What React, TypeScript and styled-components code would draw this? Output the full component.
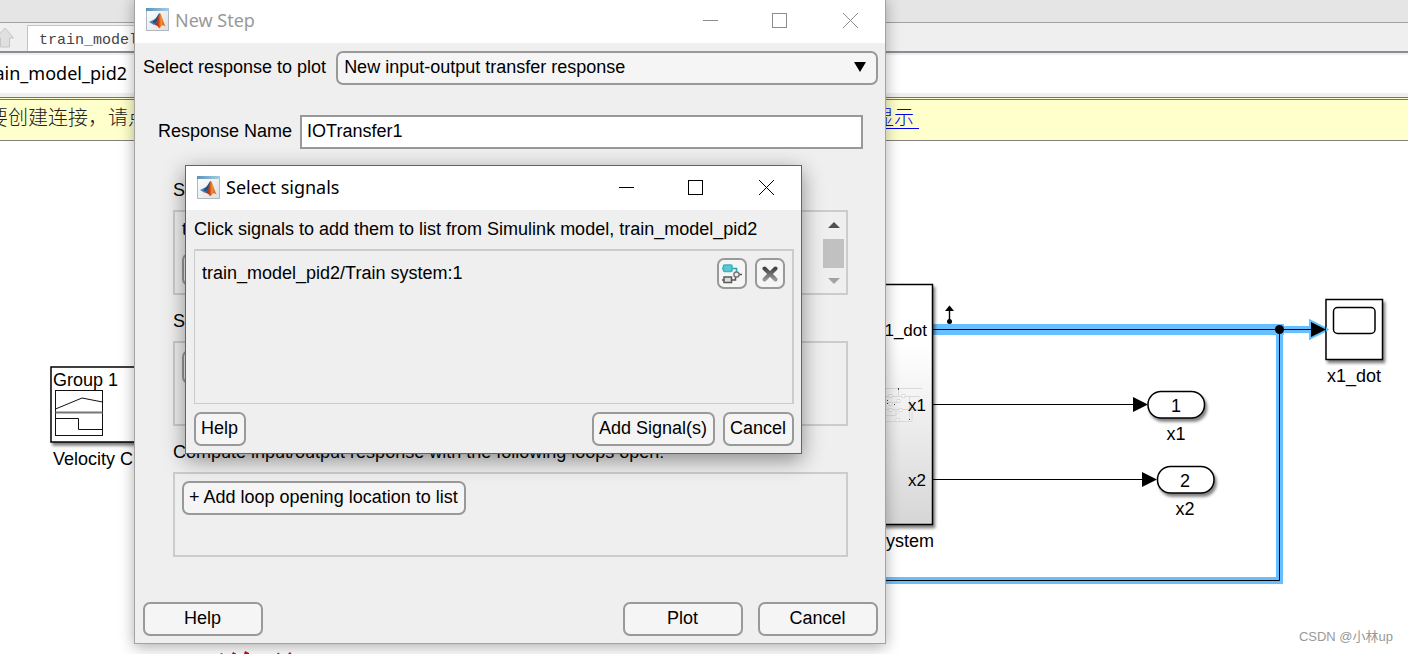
import React from "react";
import styled, { createGlobalStyle, css } from "styled-components";

const sans = `"Liberation Sans", Arial, "Noto Sans CJK SC", sans-serif`;
const ui = `"Noto Sans", "Segoe UI", "Noto Sans CJK SC", sans-serif`;

const GlobalStyle = createGlobalStyle`
  * { box-sizing: border-box; }
  body { margin: 0; background: #fff; color: #000; font-family: ${sans}; font-size: 18px; line-height: 20px; overflow: hidden; }
  button, input, select { font: inherit; color: inherit; margin: 0; }
`;

/* ---------- editor behind the dialogs ---------- */

const Desktop = styled.main`
  position: relative;
  min-height: 100vh;
  display: flex;
  flex-direction: column;
  overflow: hidden;
`;

const Ribbon = styled.div`
  height: 23px;
  background: #e5e5e5;
  border-bottom: 1px solid #a0a0a0;
`;

const TabBar = styled.nav`
  height: 30px;
  display: flex;
  align-items: flex-end;
  gap: 12px;
  background: #efefef;
  border-bottom: 2px solid #8a8d95;
`;

const UpButton = styled.button`
  width: 15px;
  height: 26px;
  padding: 0;
  border: 0;
  background: none;
  display: flex;
  align-items: center;
`;

const Tab = styled.a`
  width: 190px;
  height: 26px;
  padding: 5px 11px 0;
  border: 1px solid #c4c4c4;
  border-bottom: 0;
  background: #fff;
  color: #444;
  text-decoration: none;
  white-space: nowrap;
  font-family: "Liberation Mono", monospace;
  font-size: 15px;
`;

const PathBar = styled.div`
  height: 44px;
  background: #fff;
  border-top: 2px solid #efefef;
  border-bottom: 4px solid #efefef;
  display: flex;
  align-items: center;
  padding-bottom: 2px;
  font-family: ${ui};
`;

const PathName = styled.span`
  width: 127px;
  display: flex;
  justify-content: flex-end;
  white-space: nowrap;
`;

const Notice = styled.div`
  height: 44px;
  display: flex;
  padding-top: 6px;
  background: #ffffcc;
  border-top: 3px double #70747c;
  border-bottom: 1px solid #808080;
  font-family: "Noto Sans CJK SC", sans-serif;
  font-weight: 300;
  font-size: 20px;
  line-height: 22px;
  color: #222;
`;

const NoticeText = styled.span`
  width: 886px;
  margin-left: -12px;
  white-space: nowrap;
`;

const NoticeLink = styled.a`
  color: #0000ee;
  width: 45px;
  height: 23px;
  text-decoration: none;
  border-bottom: 1px solid #0000ee;
`;

const Canvas = styled.section`
  flex: 1;
  overflow: hidden;
  svg { display: block; }
`;

const Watermark = styled.span`
  position: absolute;
  right: 15px;
  bottom: 7px;
  color: #999;
  font-family: ${sans};
  font-size: 13px;
`;

/* ---------- dialogs ---------- */

const Window = styled.div<{ $active?: boolean }>`
  position: absolute;
  background: #efefef;
  border: 1px solid ${p => (p.$active ? "#646464" : "#a3a3a3")};
  box-shadow: ${p => (p.$active ? "0 6px 20px rgba(0,0,0,.42)" : "0 3px 14px rgba(0,0,0,.32)")};
`;

const StepWindow = styled(Window)`
  left: 134px;
  top: -3px;
  width: 752px;
`;

const SignalsWindow = styled(Window)`
  left: 185px;
  top: 165px;
  width: 617px;
`;

const TitleBar = styled.header<{ $active?: boolean }>`
  height: ${p => (p.$active ? 44 : 45)}px;
  display: flex;
  align-items: center;
  padding: 0 0 2px 11px;
  gap: 6px;
  background: #fff;
  color: ${p => (p.$active ? "#000" : "#999")};
`;

const Title = styled.h1`
  flex: 1;
  margin: 0;
  font: 400 18px/22px ${ui};
`;

const CaptionButtons = styled.div`
  display: flex;
`;

const CaptionButton = styled.button`
  width: 70px;
  height: 40px;
  padding: 0;
  border: 0;
  background: none;
  display: flex;
  align-items: center;
  justify-content: center;
`;

const Body = styled.form`
  padding: 8px 7px 7px 8px;
`;

const control = css`
  height: 34px;
  border: 2px solid #999;
  background: #f5f5f5;
`;

const Button = styled.button<{ $wide?: boolean }>`
  ${control}
  width: ${p => (p.$wide ? "120px" : "auto")};
  padding: 0 6px 2px 5px;
  border-radius: 7px;
  white-space: nowrap;
`;

const IconButton = styled.button`
  width: 30px;
  height: 31px;
  padding: 0;
  border: 2px solid #999;
  border-radius: 7px;
  background: #f5f5f5;
  display: flex;
  align-items: center;
  justify-content: center;
`;

const Field = styled.div`
  display: flex;
  gap: 10px;
`;

const NameField = styled(Field)`
  margin: 30px 15px 29px;
  gap: 8px;
`;

const Label = styled.label`
  line-height: 32px;
  white-space: nowrap;
`;

const SelectBox = styled.div`
  position: relative;
  flex: 1;
  svg { position: absolute; right: 12px; top: 11px; pointer-events: none; }
`;

const Select = styled.select`
  ${control}
  display: block;
  width: 100%;
  padding: 0 6px 2px;
  border-radius: 7px;
  appearance: none;
`;

const TextInput = styled.input`
  ${control}
  flex: 1;
  min-width: 0;
  padding: 0 5px 2px;
  background: #fff;
`;

const Sections = styled.div`
  display: flex;
  flex-direction: column;
  gap: 14px;
  margin: 0 30px 45px;
`;

const SectionLabel = styled.h2`
  margin: 0 0 8px;
  font: inherit;
  line-height: 24px;
`;

const Panel = styled.div`
  height: 85px;
  border: 2px solid #ccc;
  display: flex;
  justify-content: space-between;
  overflow: hidden;
`;

const PanelItems = styled.div`
  padding: 7px;
  display: flex;
  flex-direction: column;
  align-items: flex-start;
  gap: 14px;
`;

const ScrollBar = styled.div`
  width: 23px;
  padding: 9px 2px 8px 0;
  display: flex;
  flex-direction: column;
  justify-content: space-between;
  align-items: center;
`;

const ScrollThumb = styled.div`
  width: 21px;
  height: 29px;
  background: #c1c1c1;
`;

const Footer = styled.footer`
  display: flex;
  gap: 8px;
  & > :first-child { margin-right: auto; }
`;

const StepFooter = styled(Footer)`
  gap: 15px;
`;

const Hint = styled.p`
  margin: 0 0 9px;
  line-height: 22px;
`;

const SignalList = styled.ul`
  height: 155px;
  margin: 0 0 8px;
  padding: 7px;
  list-style: none;
  border: solid #ccc;
  border-width: 2px 2px 1px 1px;
`;

const SignalRow = styled.li`
  display: flex;
  gap: 8px;
`;

const SignalName = styled.span`
  flex: 1;
  line-height: 30px;
`;

/* ---------- icons ---------- */

const MatlabIcon = ({ id }: { id: string }) => (
  <svg width="23" height="23" viewBox="0 0 23 23" aria-hidden="true">
    <defs>
      <linearGradient id={id + "bg"} x1="0" y1="0" x2="1" y2="1">
        <stop offset="0" stopColor="#fff" />
        <stop offset="1" stopColor="#dcdfe3" />
      </linearGradient>
      <linearGradient id={id + "top"}>
        <stop offset="0" stopColor="#5a93ba" />
        <stop offset="1" stopColor="#a6cee6" />
      </linearGradient>
      <linearGradient id={id + "fl"} x1="0" y1="0" x2="1" y2="0">
        <stop offset="0" stopColor="#7a1f14" />
        <stop offset=".4" stopColor="#c9401a" />
        <stop offset=".62" stopColor="#f6952c" />
        <stop offset="1" stopColor="#c4381a" />
      </linearGradient>
    </defs>
    <rect x=".5" y=".5" width="22" height="22" fill={`url(#${id}bg)`} stroke="#b4b8bd" />
    <rect x="0" y="0" width="23" height="3" fill={`url(#${id}top)`} />
    <path d="M3 14l5-2.500c2-.4 3-3.500 5.500-6.500l-2 8-3.500 4z" fill="#3f86c0" />
    <path d="M8 12c2-.5 3.500-4.500 5.500-7l-1.500 7-2.500 4-3-1.500z" fill="#274f7c" />
    <path d="M8 17c2-1 2.500-2.500 3.500-5 .8-3 1.500-7 2.300-7 1.500 0 2.700 7.500 5.700 13.500-2-1.700-3-1.700-4.200-.2-.9 1-1.300 1.600-2.300 2-.8-2-2.500-3.500-5-3.300z" fill={`url(#${id}fl)`} />
  </svg>
);

const Caption = ({ active }: { active?: boolean }) => {
  const c = active ? "#000" : "#8c8c8c";
  return (
    <CaptionButtons>
      <CaptionButton type="button" aria-label="Minimize">
        <svg width="16" height="16"><path d="M1 8.500h15" stroke={c} /></svg>
      </CaptionButton>
      <CaptionButton type="button" aria-label="Maximize">
        <svg width="16" height="16"><rect x=".5" y="1.500" width="14" height="14" fill="none" stroke={c} /></svg>
      </CaptionButton>
      <CaptionButton type="button" aria-label="Close">
        <svg width="16" height="16"><path d="M1 1l15 15M16 1l-15 15" stroke={c} /></svg>
      </CaptionButton>
    </CaptionButtons>
  );
};

const HighlightIcon = () => (
  <svg width="22" height="22" viewBox="0 0 22 22" fill="none" aria-hidden="true">
    <path d="M1 5.500h14.500v4" stroke="#2aa5b5" strokeWidth="1.600" />
    <rect x="2.500" y="2" width="8.500" height="6.500" rx="1" fill="#5cc8d2" stroke="#3fb3c0" strokeWidth="1.600" />
    <path d="M1 17h13.500v-4.500M18 11.500h3" stroke="#555" strokeWidth="1.500" />
    <rect x="3" y="14" width="7.500" height="5.500" fill="#ddd" stroke="#5a5a5a" strokeWidth="1.500" />
    <circle cx="15.500" cy="11.500" r="2.600" fill="#eee" stroke="#777" strokeWidth="1.500" />
  </svg>
);

const RemoveIcon = () => (
  <svg width="20" height="20" viewBox="0 0 20 20" aria-hidden="true">
    <defs>
      <linearGradient id="cross" x1="0" y1="0" x2="0" y2="1">
        <stop offset="0" stopColor="#444" />
        <stop offset="1" stopColor="#959595" />
      </linearGradient>
    </defs>
    <path d="M4.500 4.500L15.500 15.500M15.500 4.500L4.500 15.500" stroke="url(#cross)" strokeWidth="4" strokeLinecap="round" />
  </svg>
);

/* ---------- block diagram ---------- */

const Diagram = () => (
  <svg width="1408" height="513" viewBox="0 141 1408 513" fontFamily="Liberation Sans, Arial, sans-serif" fontSize="18">
    <defs>
      <linearGradient id="block" x1="0" y1="0" x2="0" y2="1">
        <stop offset=".25" stopColor="#fff" />
        <stop offset="1" stopColor="#d6d6d6" />
      </linearGradient>
      <filter id="shade" x="-20%" y="-20%" width="150%" height="150%">
        <feDropShadow dx="2" dy="3" stdDeviation="1.500" floodOpacity=".5" />
      </filter>
    </defs>

    {/* signal builder */}
    <rect x="51" y="367" width="110" height="75" fill="#fff" stroke="#000" strokeWidth="1.500" filter="url(#shade)" />
    <text x="53" y="386">Group 1</text>
    <g fill="none" stroke="#111">
      <rect x="55.500" y="390.500" width="47" height="45" />
      <path d="M55.500 409L82 398l20.500 4M55.500 418.500h23v11h24" />
      <path d="M55.500 412.500h47" stroke="#777" strokeWidth="2" />
    </g>
    <text x="53" y="465">Velocity C</text>

    {/* highlighted signal */}
    <g fill="none" stroke="#66c0ff">
      <path d="M933 329.500h351" strokeWidth="11" />
      <path d="M1280 329.500h34M1279.500 329v251.500H880" strokeWidth="7" />
      <path d="M1311 322l15 7.500-15 7.500z" strokeWidth="4" />
    </g>
    <path d="M933 329.500h380M1279.500 329v251.500H880M933 404.500h202M933 479.500h212" fill="none" stroke="#000" />
    <circle cx="1279.500" cy="329.500" r="4.500" />

    {/* subsystem */}
    <rect x="800" y="284.500" width="132.500" height="240" fill="url(#block)" stroke="#000" strokeWidth="1.500" filter="url(#shade)" />
    <g fill="none" stroke="#dadada">
      <path d="M880 388.500h42M880 396.500h40M880 402.500h20M880 409.500h42M880 415.500h16v-6M880 421.500h32v-10M898.500 388v8M909.500 396v24" />
      <path d="M889 394.500h3v3h-3zM902 394.500h3v3h-3zM897 399.500h3v3h-3zM889 402.500h3v3h-3zM889 408.500h3v3h-3zM899 408.500h3v3h-3zM896 418.500h3v3h-3z" fill="#fff" />
    </g>
    <path d="M898 388h1v2h-1zM887 400h1v1h-1zM887 403h1v1h-1zM894 404h1v1h-1zM909 419h1v1h-1z" fill="#444" />
    <g textAnchor="end" fontSize="17">
      <text x="927" y="336">x1_dot</text>
      <text x="926" y="411">x1</text>
      <text x="926" y="486">x2</text>
    </g>
    <text x="934" y="547" textAnchor="end">system</text>

    {/* scope */}
    <rect x="1326" y="299.500" width="56.500" height="60" fill="#fff" stroke="#000" strokeWidth="1.500" filter="url(#shade)" />
    <rect x="1333.500" y="307.500" width="41.500" height="26" rx="4" fill="#fff" stroke="#000" strokeWidth="1.500" />

    {/* arrow heads */}
    <path d="M1326 327l3 2.500-3 2.500z" fill="#66c0ff" />
    <path d="M1311 322l15 7.500-15 7.500zM1133 397l15 7.500-15 7.500zM1142 472l15 7.500-15 7.500z" />

    {/* outports */}
    <g fill="#fff" stroke="#000" strokeWidth="1.500" filter="url(#shade)">
      <rect x="1148" y="391.500" width="56.500" height="26.500" rx="13" />
      <rect x="1157.500" y="466.500" width="56.500" height="26.500" rx="13" />
    </g>
    <g textAnchor="middle">
      <text x="1354" y="382">x1_dot</text>
      <text x="1176" y="412">1</text>
      <text x="1176" y="440">x1</text>
      <text x="1185" y="487">2</text>
      <text x="1185" y="515">x2</text>
    </g>

    {/* resize cursor */}
    <path d="M949.500 305.500l4.500 5.500h-9z" />
    <path d="M949.500 309v12" stroke="#000" strokeWidth="1.400" />
    <circle cx="949.500" cy="321.500" r="2.500" />

    {/* red marks at the lower edge */}
    <path d="M220 654l1.500-1 1.500 1zM232 654l1-2 3 1.500v.5zM244 654l1-3 4 2v1zM277 654l1-1.500 2 1.500zM288 654l2-2 1.500 2z" fill="#c00d1a" />
  </svg>
);

const App = () => (
  <>
    <GlobalStyle />
    <Desktop>
      <Ribbon />
      <TabBar>
        <UpButton type="button" aria-label="Up to parent">
          <svg width="15" height="22" viewBox="0 0 15 22">
            <path d="M5 1l8.500 10H9.500v9h-9v-9H-4z" fill="#e0e0e0" stroke="#c6c6c6" />
          </svg>
        </UpButton>
        <Tab href="#model">train_model</Tab>
      </TabBar>
      <PathBar><PathName>train_model_pid2</PathName></PathBar>
      <Notice>
        <NoticeText>要创建连接，请点</NoticeText>
        <NoticeLink href="#show">显示</NoticeLink>
      </Notice>
      <Canvas><Diagram /></Canvas>
      <Watermark>CSDN @小林up</Watermark>

      <StepWindow role="dialog" aria-label="New Step">
        <TitleBar>
          <MatlabIcon id="step" />
          <Title>New Step</Title>
          <Caption />
        </TitleBar>
        <Body>
          <Field>
            <Label htmlFor="response">Select response to plot</Label>
            <SelectBox>
              <Select id="response">
                <option>New input-output transfer response</option>
              </Select>
              <svg width="12" height="10"><path d="M0 0h12L6 10z" /></svg>
            </SelectBox>
          </Field>
          <NameField>
            <Label htmlFor="name">Response Name</Label>
            <TextInput id="name" defaultValue="IOTransfer1" />
          </NameField>
          <Sections>
            <section>
              <SectionLabel>Specify input signals:</SectionLabel>
              <Panel>
                <PanelItems>
                  <span>train_model_pid2</span>
                  <Button type="button">+ Add signal to list</Button>
                </PanelItems>
                <ScrollBar>
                  <svg width="12" height="7"><path d="M0 7l6-6 6 6z" fill="#505050" /></svg>
                  <ScrollThumb />
                  <svg width="12" height="7"><path d="M0 0l6 6 6-6z" fill="#a3a3a3" /></svg>
                </ScrollBar>
              </Panel>
            </section>
            <section>
              <SectionLabel>Specify output signals:</SectionLabel>
              <Panel>
                <PanelItems>
                  <Button type="button">+ Add signal to list</Button>
                </PanelItems>
              </Panel>
            </section>
            <section>
              <SectionLabel>Compute input/output response with the following loops open:</SectionLabel>
              <Panel>
                <PanelItems>
                  <Button type="button">+ Add loop opening location to list</Button>
                </PanelItems>
              </Panel>
            </section>
          </Sections>
          <StepFooter>
            <Button type="button" $wide>Help</Button>
            <Button type="button" $wide>Plot</Button>
            <Button type="button" $wide>Cancel</Button>
          </StepFooter>
        </Body>
      </StepWindow>

      <SignalsWindow $active role="dialog" aria-label="Select signals">
        <TitleBar $active>
          <MatlabIcon id="signals" />
          <Title>Select signals</Title>
          <Caption active />
        </TitleBar>
        <Body>
          <Hint>Click signals to add them to list from Simulink model, train_model_pid2</Hint>
          <SignalList>
            <SignalRow>
              <SignalName>train_model_pid2/Train system:1</SignalName>
              <IconButton type="button" aria-label="Highlight signal"><HighlightIcon /></IconButton>
              <IconButton type="button" aria-label="Remove signal"><RemoveIcon /></IconButton>
            </SignalRow>
          </SignalList>
          <Footer>
            <Button type="button">Help</Button>
            <Button type="button">Add Signal(s)</Button>
            <Button type="button">Cancel</Button>
          </Footer>
        </Body>
      </SignalsWindow>
    </Desktop>
  </>
);

export default App;
